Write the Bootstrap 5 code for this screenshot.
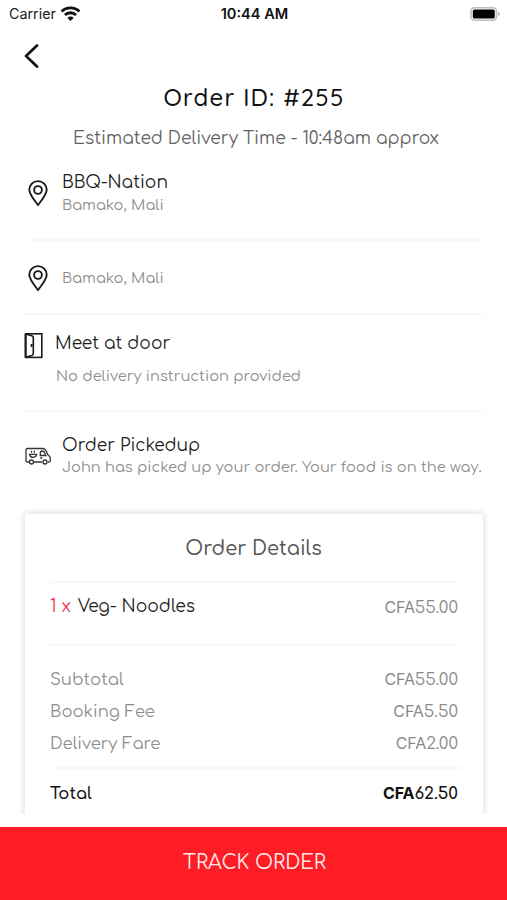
<!DOCTYPE html>
<html lang="en">
<head>
<meta charset="utf-8">
<meta name="viewport" content="width=device-width, initial-scale=1">
<title>Order #255</title>
<link rel="stylesheet" href="https://cdn.jsdelivr.net/npm/bootstrap@5.3.0/dist/css/bootstrap.min.css">
<style>
  body { font-family: Comfortaa, Quicksand, Lato, sans-serif; font-size: 17px; color: #1d1d1d; background: #fff; }
  svg { display: block; flex: none; }
  .screen { height: 900px; }
  .status { height: 28px; padding: 0 7px 0 9px; font: 400 14.3px/28px Inter, sans-serif; color: #222; }
  .status > * { flex: 1 1 0; }
  .status .clock { font-weight: 600; font-size: 14.6px; color: #111; }
  .topbar { height: 56px; padding: 16px 24px 0; }
  .page-title { height: 27px; padding-left: 1px; font: 500 24px/27px Quicksand, Lato, sans-serif; letter-spacing: 1.25px; color: #111; }
  .eta { height: 26px; margin-top: 14px; padding-left: 5px; line-height: 27px; font-size: 17.1px; color: #636363; }
  .step { margin: 0 23px 0 24px; border-bottom: 2px solid #f8f8f8; }
  .step .head { line-height: 23px; }
  .step .icon-gap { margin-left: 14px; }
  .step .icon-gap-sm { margin-left: 12px; }
  .note { font-size: 14.65px; line-height: 23px; color: #8d8d8d; white-space: nowrap; }
  .s-from { height: 90px; padding-top: 20px; margin-left: 28px; margin-right: 25px; }
  .s-from svg { margin-top: 9px; }
  .s-to { height: 74px; padding-top: 2px; }
  .s-door { height: 97px; padding-top: 17px; }
  .s-door .note { padding: 10px 0 0 1px; }
  .s-van { height: 101px; padding-top: 22px; border: 0; }
  .s-van svg { margin: 13px 0 0 1px; }
  .s-van .icon-gap-sm { margin-left: 11px; }
  .s-van .note { margin-top: -1px; }
  .clip { height: 306px; margin: -5px 14px 0; padding: 6px 10px 0 11px; overflow: hidden; }
  .receipt { height: 340px; padding: 0 25px; border-radius: 3px; background: #fff; box-shadow: 0 0 5px 3px #ececec; }
  .heading { height: 69px; padding-right: 1px; line-height: 71px; font-size: 19.45px; color: #555; border-bottom: 2px solid #f8f8f8; }
  .item { height: 63px; line-height: 47px; font-size: 17.1px; border-bottom: 2px solid #f8f8f8; }
  .item .amount { padding-top: 1px; }
  .qty { color: #f5384b; }
  .dish { margin-left: 7px; }
  .fees { padding: 18px 0 7px; font-size: 16.4px; line-height: 32px; color: #8d8d8d; }
  .amount { font-size: 16.8px; color: #8a8a8a; }
  .amount b { font: 400 16px Inter, sans-serif; letter-spacing: -.1px; }
  .total { height: 52px; margin-right: -5px; padding-right: 5px; border-top: 2px solid #f8f8f8; line-height: 50px; font-size: 16.4px; font-weight: 600; color: #111; }
  .total .amount { color: #111; }
  .total .amount b { font-weight: 700; letter-spacing: -.1px; }
  .track { height: 73px; border-radius: 0; border: 0; padding-left: 14px; background: #ff1d25; color: #ffe9e9; font-size: 19.6px; }
  .track:hover { background: #ff1d25; color: #fff; }
</style>
<script src="https://cdn.jsdelivr.net/npm/bootstrap@5.3.0/dist/js/bootstrap.bundle.min.js"></script>
</head>
<body>
<main class="screen d-flex flex-column overflow-hidden">
  <div class="status d-flex align-items-center">
    <div class="d-flex align-items-center"><span>Carrier</span>
      <svg class="ms-1" width="21" height="16" viewBox="0 0 20 15" fill="none" stroke="#111" stroke-width="2.7"><path d="M1.500 5.200a12 12 0 0 1 17 0M4.700 8.500a7.500 7.500 0 0 1 10.600 0"/><path d="M10 14.200l-3-3a4.200 4.200 0 0 1 6 0z" fill="#111" stroke="none"/></svg>
    </div>
    <div class="clock text-center">10:44 AM</div>
    <div class="d-flex justify-content-end">
      <svg width="30" height="14" viewBox="0 0 30 14"><rect x="1" y=".8" width="25.500" height="12.400" rx="3.500" fill="#fff" stroke="#bdbdbd" stroke-width="1.600"/><rect x="2.800" y="2.400" width="22" height="9" rx="1.500" fill="#000"/><path d="M28 4.800q2 .6 2 2.200t-2 2.200z" fill="#bdbdbd"/></svg>
    </div>
  </div>
  <div class="topbar"><svg width="15" height="24" viewBox="0 0 15 24" fill="none" stroke="#111" stroke-width="2.700" stroke-linecap="round" stroke-linejoin="round"><path d="M13 1.500 2 12l11 10.500"/></svg></div>
  <h1 class="page-title text-center mb-0">Order ID: #255</h1>
  <div class="eta text-center">Estimated Delivery Time - 10:48am approx</div>

  <section class="step s-from d-flex">
    <svg width="20" height="27" viewBox="0 0 20 27" fill="none" stroke="#1a1a1a" stroke-width="1.900"><path d="M10 25C6.500 20.500 1.300 14.500 1.300 9.800a8.700 8.700 0 0 1 17.400 0c0 4.700-5.200 10.700-8.700 15.200z"/><circle cx="10" cy="10" r="3.900"/></svg>
    <div class="icon-gap"><div class="head">BBQ-Nation</div><div class="note">Bamako, Mali</div></div>
  </section>

  <section class="step s-to d-flex align-items-center">
    <svg class="ms-1" width="20" height="27" viewBox="0 0 20 27" fill="none" stroke="#1a1a1a" stroke-width="1.900"><path d="M10 25C6.500 20.500 1.300 14.500 1.300 9.800a8.700 8.700 0 0 1 17.400 0c0 4.700-5.200 10.700-8.700 15.200z"/><circle cx="10" cy="10" r="3.900"/></svg>
    <div class="note icon-gap">Bamako, Mali</div>
  </section>

  <section class="step s-door d-flex">
    <svg width="19" height="27" viewBox="0 0 19 27" fill="none" stroke="#1a1a1a" stroke-width="1.600"><rect x="1.600" y="1.800" width="16.200" height="23.600"/><path d="M1.600 2l6.200 1.800q1.500.5 1.500 2v15.600q0 1.500-1.500 2L1.600 25.200" /><path d="M7.600 12v3" stroke-width="1.800"/><path d="M1.600 2v23.300" stroke-width="2"/></svg>
    <div class="icon-gap-sm"><div class="head">Meet at door</div><div class="note">No delivery instruction provided</div></div>
  </section>

  <section class="step s-van d-flex">
    <svg width="26" height="18" viewBox="0 0 26 18" fill="none" stroke="#333" stroke-width="1.300"><path d="M4 15H2.500Q1 15 1 13.500V3q0-1.500 1.500-1.500h15.500q2 .2 3 2L23 8l1.500 1.200q.8.500.8 1.800v2.500q0 1.500-2.300 1.500M9 15h8"/><circle cx="6.500" cy="15" r="2"/><circle cx="20" cy="15" r="2"/><path d="M15.300 8.500V6q0-2 2-2t2.500 2l1 2.500z"/><path d="M3.800 7.300h8.500M4.800 8q.5 2.300 3.200 2.300T11.500 8M6.500 3.800v2M9.300 3.800v2M15.200 11h2"/></svg>
    <div class="icon-gap-sm"><div class="head">Order Pickedup</div><div class="note">John has picked up your order. Your food is on the way.</div></div>
  </section>

  <div class="clip">
    <section class="receipt">
      <h2 class="heading text-center mb-0">Order Details</h2>
      <div class="item d-flex justify-content-between"><div><span class="qty">1 x</span><span class="dish">Veg- Noodles</span></div><div class="amount"><b>CFA</b>55.00</div></div>
      <div class="fees">
        <div class="d-flex justify-content-between"><span>Subtotal</span><span class="amount"><b>CFA</b>55.00</span></div>
        <div class="d-flex justify-content-between"><span>Booking Fee</span><span class="amount"><b>CFA</b>5.50</span></div>
        <div class="d-flex justify-content-between"><span>Delivery Fare</span><span class="amount"><b>CFA</b>2.00</span></div>
      </div>
      <div class="total d-flex justify-content-between"><span>Total</span><span class="amount"><b>CFA</b>62.50</span></div>
    </section>
  </div>
  <button class="track btn w-100 mt-auto">TRACK ORDER</button>
</main>
</body>
</html>
